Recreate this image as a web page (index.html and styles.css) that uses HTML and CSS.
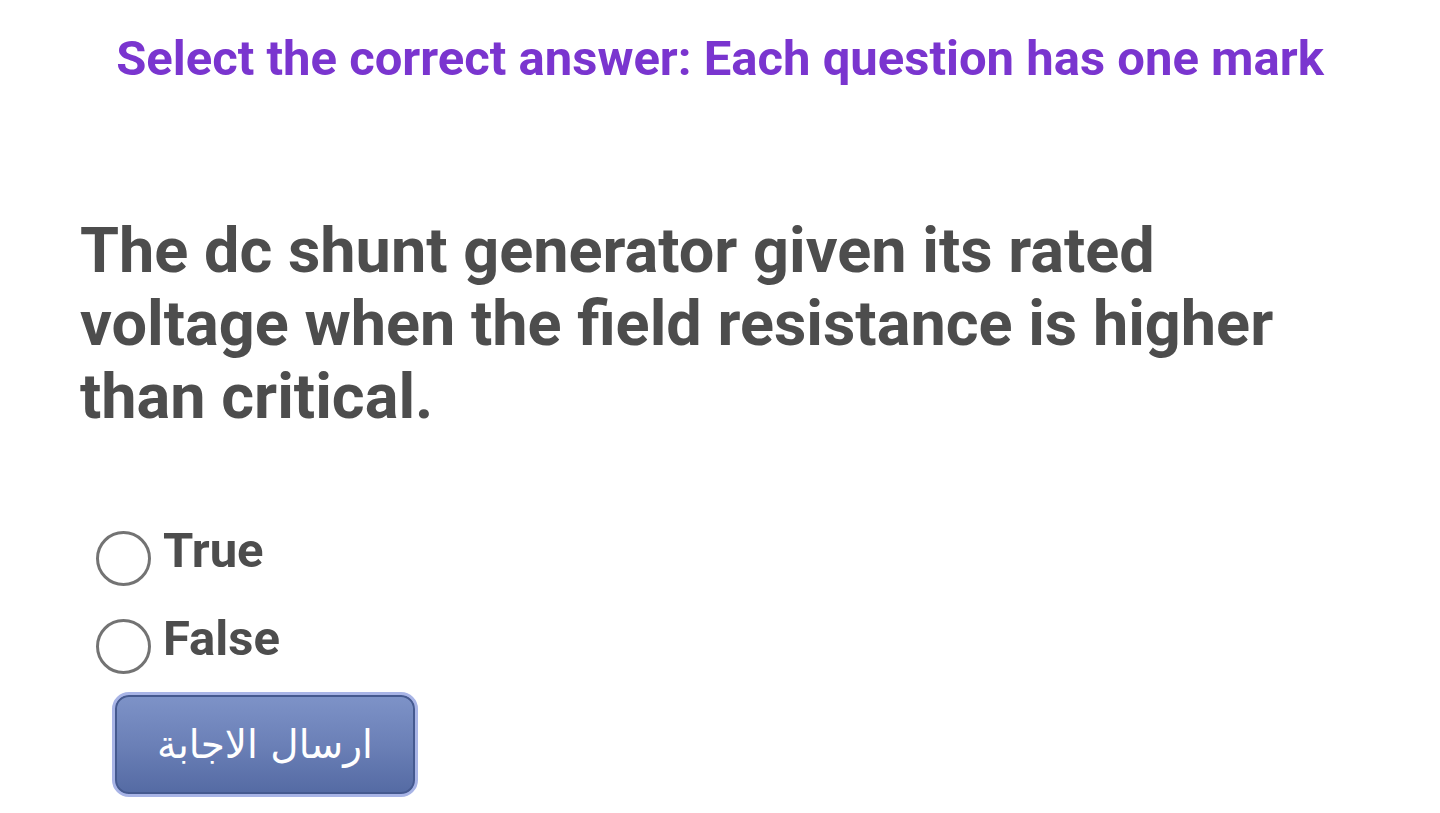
FILE: index.html
```html
<!DOCTYPE html>
<html>
<head>
<meta charset="utf-8">
<link rel="stylesheet" href="styles.css">
</head>
<body>
<div class="page">
  <h1 class="title">Select the correct answer: Each question has one mark</h1>
  <p class="question">The dc shunt generator given its rated voltage when the field resistance is higher than critical.</p>
  <div class="options">
    <label class="option"><span class="radio"></span><span class="opt-text">True</span></label>
    <label class="option"><span class="radio"></span><span class="opt-text">False</span></label>
  </div>
  <button class="submit" dir="rtl">ارسال الاجابة</button>
</div>
</body>
</html>
```

FILE: styles.css
```css
html, body {
  margin: 0;
  padding: 0;
  background: #ffffff;
}
.page {
  font-family: Roboto, "Liberation Sans", sans-serif;
  padding: 0 80px;
  display: flex;
  flex-direction: column;
  align-items: flex-start;
}
.title {
  align-self: stretch;
  text-align: center;
  margin: 27px 0 0 0;
  font-size: 49px;
  font-weight: 700;
  line-height: 64px;
  color: #7a35cf;
}
.question {
  margin: 123px 0 0 0;
  font-size: 63px;
  font-weight: 700;
  line-height: 73px;
  color: #4d4d4d;
  max-width: 1220px;
}
.options {
  margin-top: 94px;
  margin-left: 16px;
  display: flex;
  flex-direction: column;
  gap: 34px;
}
.option {
  display: flex;
  align-items: flex-start;
  gap: 12px;
  height: 54px;
}
.radio {
  border: 3px solid #737373;
  border-radius: 50%;
  margin-top: 4px;
  box-sizing: content-box;
  width: 49px;
  height: 49px;
}
.opt-text {
  font-size: 49px;
  font-weight: 700;
  line-height: 49px;
  color: #4d4d4d;
  margin-top: -1px;
}
.submit {
  margin-top: 23px;
  margin-left: 32px;
  width: 306px;
  height: 105px;
  border: 3px solid #a8b4e6;
  border-radius: 17px;
  box-shadow: inset 0 0 0 2px #45598f;
  background: linear-gradient(to bottom, #7e93c8 0%, #6b80b7 50%, #546aa3 100%);
  color: #ffffff;
  font-family: "DejaVu Sans", sans-serif;
  font-size: 39px;
  padding: 0;
  box-sizing: border-box;
}
```
